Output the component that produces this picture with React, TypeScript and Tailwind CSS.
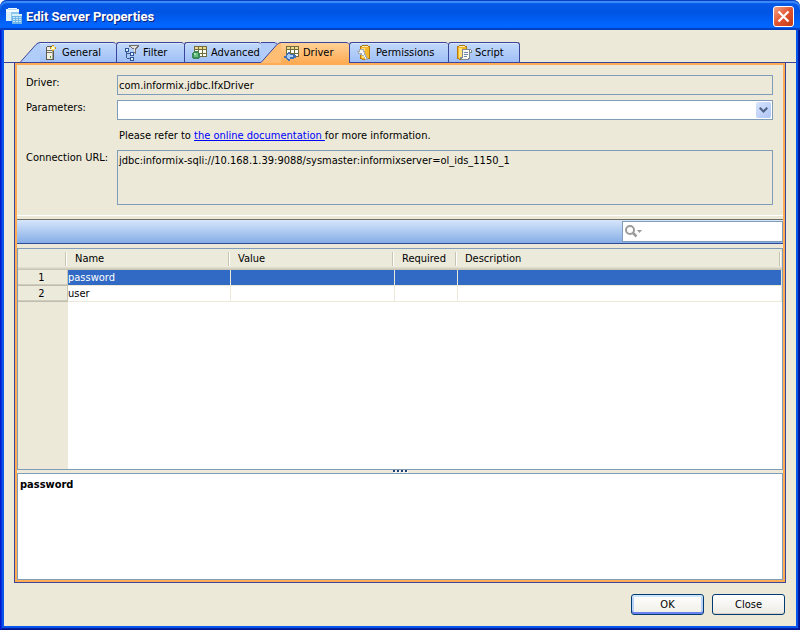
import { useState, type ReactNode } from 'react';

interface TabItem {
  id: string;
  label: string;
  width: string;
  icon: ReactNode;
}

interface Param {
  name: string;
  value: string;
  required: string;
  description: string;
}

const params: Param[] = [
  { name: 'password', value: '', required: '', description: '' },
  { name: 'user', value: '', required: '', description: '' },
];

const columns = ['Name', 'Value', 'Required', 'Description'];

function WindowIcon() {
  return (
    <svg width="16" height="16" viewBox="0 0 16 16" shapeRendering="crispEdges">
      <path d="M0 2h13v11H0z" fill="#8cc8ea" />
      <path d="M0 3h5v10H0z" fill="#dff2fc" />
      <path d="M2 0h9v1H2zM0 1h13v3H0z" fill="#f4fbff" />
      <path d="M2 1h9v1H2z" fill="#b9def3" />
      <path d="M6 6h10v10H6z" fill="#6fb6e6" />
      <path d="M6 6h10v2H6z" fill="#d8effc" />
      <path d="M7 9h2v1H7zM10 9h2v1h-2zM13 9h2v1h-2zM7 11h2v1H7zM10 11h2v1h-2zM13 11h2v1h-2zM7 13h2v1H7zM10 13h2v1h-2zM13 13h2v1h-2z" fill="#c9e8fb" />
    </svg>
  );
}

function ServerIcon() {
  return (
    <svg width="16" height="16" viewBox="0 0 16 16" shapeRendering="crispEdges">
      <path d="M4 1h6v1H4zM3 2h8v13H3z" fill="#5c5a50" />
      <path d="M4 2h5v12H4z" fill="#f3f0e2" />
      <path d="M9 3h1v11H9z" fill="#a9a695" />
      <path d="M4 5h5v1H4zM4 7h5v1H4z" fill="#77756a" />
      <path d="M7 11h1v2H7z" fill="#4a9a3c" />
      <path d="M9 0h2v6H9zM7 2h6v2H7z" fill="#c8941c" />
      <path d="M9 1h2v4H9zM8 2h4v2H8z" fill="#ffe873" />
      <path d="M9 2h2v2H9z" fill="#fffbe0" />
    </svg>
  );
}

function FilterIcon() {
  return (
    <svg width="16" height="16" viewBox="0 0 16 16" shapeRendering="crispEdges">
      <path d="M2 4h1v9H2zM3 8h4v1H3zM3 13h4v1H3z" fill="#3c5c94" />
      <path d="M1 3h4v4H1zM6 7h4v4H6zM6 12h4v4H6z" fill="#2f5596" />
      <path d="M2 4h2v2H2zM7 8h2v2H7zM7 13h2v2H7z" fill="#e9f2ff" />
      <path d="M5 0h10v2h-1v1h-1v1h-1v5h-1V8h-1V4H8V3H7V2H5z" fill="#75706c" />
      <path d="M7 1h6v1h-1v1h-1v4h-1V3H8V2H7z" fill="#e4e1dc" />
    </svg>
  );
}

function GridBase() {
  return (
    <>
      <path d="M2 1h13v11H2z" fill="#6f6d3d" />
      <path d="M3 2h3v2H3zM7 2h3v2H7zM11 2h3v2h-3z" fill="#f1d98a" />
      <path d="M3 5h3v3H3zM7 5h3v3H7zM11 5h3v3h-3zM3 9h3v2H3zM7 9h3v2H7zM11 9h3v2h-3z" fill="#fffef4" />
    </>
  );
}

function AdvancedIcon() {
  return (
    <svg width="16" height="16" viewBox="0 0 16 16" shapeRendering="crispEdges">
      <GridBase />
      <path d="M2 6h4v1h1v1h1v5H7v1H1v-1H0V8h1V7h1z" fill="#3c8a5c" />
      <path d="M2 8h4v4H2z" fill="#6cc282" />
      <path d="M2 8h2v2H2z" fill="#a9e0ae" />
    </svg>
  );
}

function DriverIcon() {
  return (
    <svg width="16" height="16" viewBox="0 0 16 16" shapeRendering="crispEdges">
      <GridBase />
      <path d="M4 7h2v2h4v1h2v3h-2v1H6v2H4v-1H3v-1H2v-1H0v-2h2V9h1V8h1z" fill="#4070b8" />
      <path d="M4 9h2v1h3v2H6v2H4v-1H3v-3h1z" fill="#a8cdf5" />
    </svg>
  );
}

function Cylinder() {
  return (
    <>
      <path d="M5 0h6v1h2v13h-2v1H5v-1H3V1h2z" fill="#b5790f" />
      <path d="M4 2h8v11h-2v1H5v-1H4z" fill="#f5b828" />
      <path d="M5 3h3v10H5z" fill="#ffe27a" />
      <path d="M5 1h6v1H5z" fill="#ffedab" />
    </>
  );
}

function PermissionsIcon() {
  return (
    <svg width="16" height="16" viewBox="0 0 16 16" shapeRendering="crispEdges">
      <Cylinder />
      <path d="M2 4h5v2h1v3h1v2h1v2h1v2H8v-2H7v-2H5v-1H3V9H1V7H0V6h2z" fill="#a3abb3" />
      <path d="M3 5h3v2h1v3h1v2h1v2H8v-2H7v-2H5V8H2V7h1z" fill="#f4f6f8" />
    </svg>
  );
}

function ScriptIcon() {
  return (
    <svg width="16" height="16" viewBox="0 0 16 16" shapeRendering="crispEdges">
      <g transform="translate(-2 0)">
        <Cylinder />
      </g>
      <path d="M6 4h9v1h1v3h-2v6h-1v1H5v-1H4v-2h2z" fill="#7c8794" />
      <path d="M7 5h6v8h-1v1H6v-1h1zM14 5h1v2h-1z" fill="#fbfbf6" />
      <path d="M8 7h4v1H8zM8 9h4v1H8zM8 11h3v1H8z" fill="#6d87b0" />
    </svg>
  );
}

function SearchIcon() {
  return (
    <svg width="18" height="13" viewBox="0 0 18 13" fill="none">
      <circle cx="5" cy="5" r="4" stroke="#9b9b9b" strokeWidth="2" />
      <path d="M8 8l3.500 3.500" stroke="#9b9b9b" strokeWidth="2.500" />
      <path d="M12 5h5l-2.500 3z" fill="#9b9b9b" />
    </svg>
  );
}

const tabs: TabItem[] = [
  { id: 'general', label: 'General', width: 'w-[76px]', icon: <ServerIcon /> },
  { id: 'filter', label: 'Filter', width: 'w-[68px]', icon: <FilterIcon /> },
  { id: 'advanced', label: 'Advanced', width: 'w-[77px]', icon: <AdvancedIcon /> },
  { id: 'driver', label: 'Driver', width: 'w-[68px]', icon: <DriverIcon /> },
  { id: 'permissions', label: 'Permissions', width: 'w-[99px]', icon: <PermissionsIcon /> },
  { id: 'script', label: 'Script', width: 'w-[72px]', icon: <ScriptIcon /> },
];

// Slanted leading edge, used by the first tab and by the active one
function Slant({ active, first }: { active: boolean; first: boolean }) {
  return (
    <svg width="20" height="21" viewBox="0 0 20 21" className="shrink-0">
      {!first && <path d="M0 0h16v21H0z" fill="#b2cdf9" />}
      {!first && <path d="M0 .5h14l2 2" stroke="#3b459b" fill="none" />}
      <path d="M0 21L16 2.500Q18 .5 20 .5V21z" fill={active ? '#ffbe73' : '#b0ccf9'} />
      <path d="M0 20.500L16 2.500Q18 .5 20 .5" stroke="#3b459b" fill="none" />
    </svg>
  );
}

function Tab({ tab, active, first, onSelect }: { tab: TabItem; active: boolean; first: boolean; onSelect: () => void }) {
  return (
    <button
      type="button"
      role="tab"
      aria-selected={active}
      onClick={onSelect}
      className={`flex overflow-hidden ${active ? '-mb-px h-[21px]' : 'h-[20px]'}`}
    >
      {(first || active) && <Slant active={active} first={first} />}
      <span
        className={`flex h-full items-center gap-[3px] rounded-tr-[3px] border-t border-[#3b459b] ${tab.width} ${
          active
            ? 'bg-linear-to-b from-[#ffd196] to-[#ffab52]'
            : 'bg-linear-to-b from-[#c2d9fb] to-[#9fbff5] shadow-[inset_0_1px_0_#d9e8fe]'
        } ${first || active ? 'pl-[3px]' : 'rounded-tl-[3px] border-l pl-[7px]'} ${
          tab.id === 'script' ? 'border-r' : ''
        }`}
      >
        {tab.icon}
        {tab.label}
      </span>
    </button>
  );
}

export default function App() {
  const [activeTab, setActiveTab] = useState('driver');
  const [selected, setSelected] = useState(0);

  return (
    <div className="flex min-h-screen flex-col bg-white font-['DejaVu_Sans_Condensed','DejaVu_Sans',sans-serif] text-[11px] leading-[14px] text-black">
      {/* Title bar */}
      <header className="flex h-[30px] items-center gap-[4px] rounded-t-[7px] bg-linear-to-b from-[#0a5be8] from-0% via-[#0054e3] via-40% to-[#0066ff] to-85% px-[6px] pt-[2px] shadow-[inset_0_1px_0_#0a3fc4,inset_0_3px_1px_#3b8dfa,inset_0_-2px_1px_#0040c0]">
        <WindowIcon />
        <h1 className="flex-1 pt-[2px] font-['Roboto',sans-serif] text-[13px] font-bold text-white [text-shadow:1px_1px_0_#0a1f7a]">
          Edit Server Properties
        </h1>
        <button
          type="button"
          aria-label="Close window"
          className="flex size-[21px] items-center justify-center rounded-[3px] border border-white bg-linear-to-br from-[#f0a084] via-[#e25430] to-[#c23a10]"
        >
          <svg width="13" height="13" viewBox="0 0 13 13">
            <path d="M1.500 1.500l10 10M11.500 1.500l-10 10" stroke="#fff" strokeWidth="2.200" />
          </svg>
        </button>
      </header>

      <div className="flex flex-1 flex-col bg-[#0855ee] px-[4px] pb-[4px] shadow-[inset_1px_0_0_#0019cf,inset_-1px_0_0_#00138c,inset_0_-1px_0_#00138c,inset_2px_0_0_#0831d9,inset_-2px_0_0_#001ea0,inset_0_-2px_0_#001ea0]">
        <div className="flex flex-1 flex-col bg-[#ece9d8]">
          {/* Tabs */}
          <div role="tablist" className="flex items-start border-b border-[#3b459b] pt-[12px] pl-[16px]">
            {tabs.map((tab, index) => (
              <Tab
                key={tab.id}
                tab={tab}
                first={index === 0}
                active={tab.id === activeTab}
                onSelect={() => setActiveTab(tab.id)}
              />
            ))}
          </div>

          {/* Driver page */}
          <main className="mx-[10px] flex flex-1 flex-col border border-t-0 border-[#3b459b]">
            <div className="flex flex-1 flex-col border-2 border-[#ffac55]">
              <div className="grid grid-cols-[91px_1fr] gap-y-[5px] border-b border-white pt-[10px] pr-[10px] pb-[10px] pl-[9px]">
                <label htmlFor="driver" className="pt-px">Driver:</label>
                <input
                  id="driver"
                  readOnly
                  value="com.informix.jdbc.IfxDriver"
                  className="h-[20px] w-full border border-[#7f9db9] px-px outline-none"
                />

                <label htmlFor="parameters" className="pt-px">Parameters:</label>
                <div className="relative">
                  <select
                    id="parameters"
                    className="block h-[20px] w-full appearance-none border border-[#7f9db9] bg-white px-px outline-none"
                  >
                    <option value=""></option>
                  </select>
                  <span className="pointer-events-none absolute top-[2px] right-[2px] flex h-[16px] w-[15px] items-center justify-center rounded-[2px] bg-linear-to-br from-[#d8e3fd] to-[#aec5f5]">
                    <svg width="9" height="6" viewBox="0 0 9 6" fill="none">
                      <path d="M.7.7l3.800 3.800L8.300.7" stroke="#4d6185" strokeWidth="2" />
                    </svg>
                  </span>
                </div>

                <p className="col-start-2 flex h-[20px] items-center pt-px pl-[2px] whitespace-pre">
                  Please refer to <a href="#docs" className="text-[#0000ff] underline">the online documentation </a>for more information.
                </p>

                <label htmlFor="url" className="pt-px">Connection URL:</label>
                <textarea
                  id="url"
                  readOnly
                  value="jdbc:informix-sqli://10.168.1.39:9088/sysmaster:informixserver=ol_ids_1150_1"
                  className="block h-[55px] w-full resize-none border border-[#7f9db9] px-px pt-[3px] outline-none"
                />
              </div>

              {/* Search bar */}
              <div className="mt-[3px] flex justify-end border-t border-b border-t-[#716f64] border-b-[#2d4a9b] bg-linear-to-b from-[#d6e6fb] to-[#86ade6] py-px">
                <label className="flex h-[21px] w-[161px] items-center border border-[#7f9db9] bg-white pl-[2px]">
                  <SearchIcon />
                  <input type="text" aria-label="Search parameters" className="min-w-0 flex-1 px-1 outline-none" />
                </label>
              </div>

              {/* Parameter table */}
              <div className="mt-[4px] flex flex-1 flex-col border border-[#7f9db9] bg-white">
                <table className="w-full table-fixed border-separate border-spacing-0">
                  <colgroup>
                    <col className="w-[50px]" />
                    <col className="w-[163px]" />
                    <col className="w-[164px]" />
                    <col className="w-[63px]" />
                    <col />
                  </colgroup>
                  <thead>
                    <tr className="h-[21px] bg-[#ebeadb] shadow-[inset_0_-1px_0_#cbc7b8,inset_0_-2px_0_#d6d2c2,inset_0_-3px_0_#e2decd]">
                      <th className="p-0 pb-px">
                        <div className="mr-[2px] h-[14px] border-r border-[#c7c5b2] shadow-[1px_0_0_#fff]" />
                      </th>
                      {columns.map((column) => (
                        <th key={column} className="p-0 pb-px text-left font-normal">
                          <div className="mr-[2px] h-[14px] border-r border-[#c7c5b2] pl-[7px] shadow-[1px_0_0_#fff]">
                            {column}
                          </div>
                        </th>
                      ))}
                    </tr>
                  </thead>
                  <tbody>
                    {params.map((param, index) => (
                      <tr
                        key={param.name}
                        onClick={() => setSelected(index)}
                        className={`h-[16px] ${index === selected ? 'bg-[#316ac5] text-white' : 'bg-white'}`}
                      >
                        <th className="border-r border-[#c7c5b2] bg-[#ebeadb] p-0 pr-[2px] font-normal text-black shadow-[inset_0_-1px_0_#c1bdae,inset_0_-2px_0_#d0ccbc]">
                          {index + 1}
                        </th>
                        <td className="border-r border-b border-[#ece9d8] p-0">{param.name}</td>
                        <td className="border-r border-b border-[#ece9d8] p-0">{param.value}</td>
                        <td className="border-r border-b border-[#ece9d8] p-0">{param.required}</td>
                        <td className="border-r border-b border-[#ece9d8] p-0">{param.description}</td>
                      </tr>
                    ))}
                  </tbody>
                </table>
                <div className="w-[50px] flex-1 bg-[#ece9d8]" />
              </div>

              {/* Splitter */}
              <div className="flex h-[3px] items-start justify-center gap-[2px]">
                <span className="size-[2px] bg-[#1f3f77] shadow-[1px_1px_0_#fff]" />
                <span className="size-[2px] bg-[#1f3f77] shadow-[1px_1px_0_#fff]" />
                <span className="size-[2px] bg-[#1f3f77] shadow-[1px_1px_0_#fff]" />
                <span className="size-[2px] bg-[#1f3f77] shadow-[1px_1px_0_#fff]" />
              </div>

              <section className="h-[107px] border border-[#7f9db9] bg-white px-[2px] pt-[4px] font-bold">
                {params[selected].name}
              </section>
            </div>
          </main>

          {/* Buttons */}
          <footer className="flex justify-end gap-[8px] py-[11px] pr-[11px]">
            <button
              type="button"
              className="h-[21px] w-[73px] rounded-[3px] border border-[#003c74] bg-linear-to-b from-white to-[#efeee6] shadow-[inset_0_2px_0_#cee7ff,inset_0_-2px_0_#6982ee,inset_2px_0_0_#bad1f8,inset_-2px_0_0_#bad1f8]"
            >
              OK
            </button>
            <button
              type="button"
              className="h-[21px] w-[73px] rounded-[3px] border border-[#003c74] bg-linear-to-b from-white to-[#ecebe5] shadow-[inset_0_-1px_0_#d6d0c5]"
            >
              Close
            </button>
          </footer>
        </div>
      </div>
    </div>
  );
}
